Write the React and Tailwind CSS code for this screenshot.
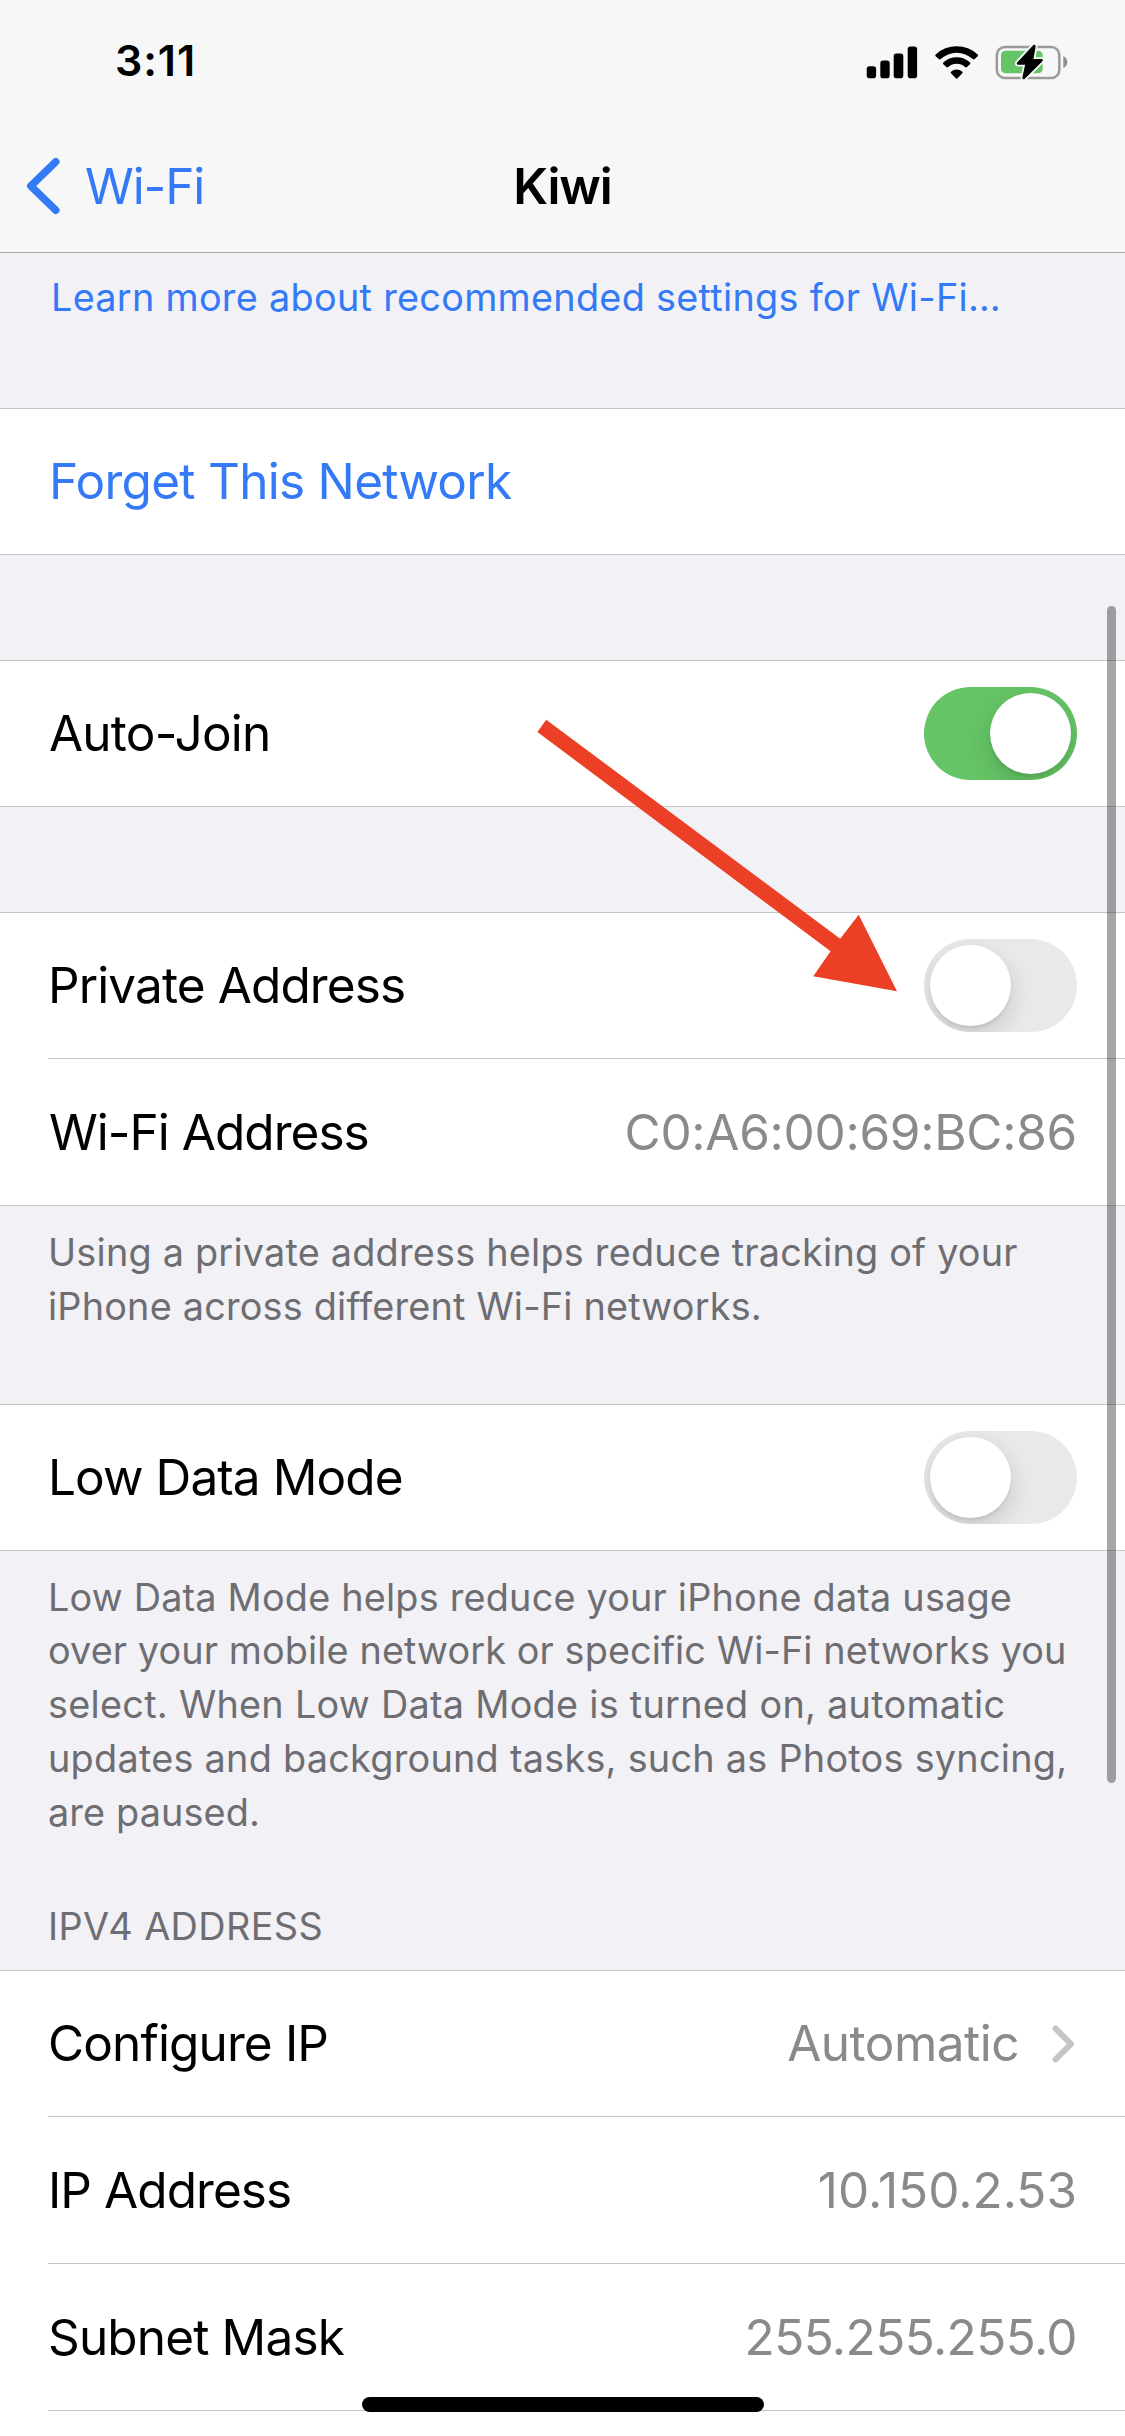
import React from "react";

function SignalIcon() {
  return (
    <svg width="52" height="34" viewBox="0 0 52 34" fill="#000">
      <rect x="0.7" y="21.3" width="9.4" height="11.9" rx="2.8" />
      <rect x="14.3" y="15.6" width="9.4" height="17.6" rx="2.8" />
      <rect x="27.7" y="8.6" width="9.6" height="24.6" rx="2.8" />
      <rect x="41.7" y="1.6" width="9.4" height="31.6" rx="2.8" />
    </svg>
  );
}

function WifiIcon() {
  return (
    <svg width="46" height="36" viewBox="0 0 138 108">
      <path d="M5 37 L14 45 Q17 47.500 20 45 A71 71 0 0 1 116 45 Q119 47.500 122 45 L131 37 Q133.500 34 131 31.500 A92 92 0 0 0 5 31.500 Q2.500 34 5 37 Z" fill="#000" />
      <path d="M28 61 L37 69 Q40 71.500 43 69 A37 37 0 0 1 93 69 Q96 71.500 99 69 L108 61 Q110.500 58 108 55.500 A58 58 0 0 0 28 55.500 Q25.500 58 28 61 Z" fill="#000" />
      <path d="M51 83 A26 26 0 0 1 85 83 Q87.500 85.500 85 88 L70.500 103 Q68 105.500 65.500 103 L51 88 Q48.500 85.500 51 83 Z" fill="#000" />
    </svg>
  );
}

function BatteryIcon() {
  return (
    <svg width="90" height="50" viewBox="0 0 270 150">
      <rect x="20.500" y="30" width="187.500" height="93" rx="24" fill="none" stroke="#9b9b9b" strokeWidth="7.500" />
      <path d="M220 58 Q232 64 232 75 Q232 87 220 93 Z" fill="#8e8e8e" />
      <rect x="33" y="41" width="125" height="68" rx="14" fill="#65c466" />
      <path
        d="M131 26 L83 78 Q81 81 85 81 H108 L99 122 Q99 126 103 124 L156 71 Q158 68 154 68 H128 L135 28 Q135 24 131 26 Z"
        fill="#f7f7f7"
        stroke="#f7f7f7"
        strokeWidth="15"
        strokeLinejoin="round"
      />
      <path
        d="M131 26 L83 78 Q81 81 85 81 H108 L99 122 Q99 126 103 124 L156 71 Q158 68 154 68 H128 L135 28 Q135 24 131 26 Z"
        fill="#000"
        stroke="#000"
        strokeWidth="4"
        strokeLinejoin="round"
      />
    </svg>
  );
}

function Toggle({ on }) {
  return (
    <div
      className={`flex h-[93px] w-[153px] items-center overflow-hidden rounded-full px-1.5 ${
        on ? "justify-end bg-[#65c466]" : "justify-start bg-[#e9e9ea]"
      }`}
    >
      <div className="size-[81px] rounded-full bg-white shadow-[0_9px_24px_rgba(0,0,0,0.15),0_3px_3px_rgba(0,0,0,0.06)]" />
    </div>
  );
}

function Row({ label, labelClass, value, valueClass, children, tall, divider = true }) {
  return (
    <div className={`flex pl-12 ${tall ? "h-[147px]" : "h-[146px]"}`}>
      <div
        className={`flex grow items-center justify-between pr-12 ${
          divider ? "border-b border-[#c6c6c8]" : "pb-px"
        }`}
      >
        <span className={`leading-[60px] ${tall ? "" : "pb-0.5"} ${labelClass}`}>{label}</span>
        {value && (
          <span className={`leading-[60px] text-[#8a8a8d] ${valueClass}`}>{value}</span>
        )}
        {children}
      </div>
    </div>
  );
}

function Group({ children, open }) {
  return (
    <section className="border-t border-[#c6c6c8] bg-white">
      {children}
      {!open && <div className="-mt-px h-px bg-[#c6c6c8]" />}
    </section>
  );
}

export default function App() {
  return (
    <div className="relative flex h-[2436px] w-[1125px] flex-col overflow-hidden bg-[#f2f1f6] font-['Inter',sans-serif] text-[49.5px] whitespace-nowrap text-black">
      <header className="h-[253px] shrink-0 border-b border-[#a9a9ac] bg-[#f7f7f7]">
        <div className="flex h-[123px] items-center justify-between pr-[45px] pl-[115px]">
          <span className="pb-[3px] text-[43px] leading-[60px] font-semibold tracking-[0.9px]">3:11</span>
          <div className="flex items-center">
            <SignalIcon />
            <div className="ml-[15.5px]">
              <WifiIcon />
            </div>
            <div className="ml-[10.5px]">
              <BatteryIcon />
            </div>
          </div>
        </div>
        <div className="grid h-[126px] grid-cols-3 items-center">
          <div className="flex items-center text-[#347af6]">
            <svg
              className="ml-[25px]"
              width="36"
              height="58"
              viewBox="0 0 36 58"
              fill="none"
              stroke="currentColor"
              strokeWidth="7.500"
              strokeLinecap="round"
              strokeLinejoin="round"
            >
              <path d="M30.800 4.800 L5.800 29 L30.800 53.200" />
            </svg>
            <span className="ml-6 leading-[60px] tracking-[-1.1px]">Wi-Fi</span>
          </div>
          <h1 className="text-center leading-[60px] font-semibold tracking-[-1.1px]">Kiwi</h1>
        </div>
      </header>

      <p className="h-[155px] shrink-0 pt-[17px] pl-[51px] text-[37.8px] leading-[54px] tracking-[0.29px] text-[#347af6]">
        Learn more about recommended settings for Wi-Fi…
      </p>

      <Group>
        <Row label="Forget This Network" labelClass="ml-px tracking-[-0.73px] text-[#347af6]" divider={false} />
      </Group>

      <div className="h-[105px] shrink-0" />

      <Group>
        <Row label="Auto-Join" labelClass="ml-px tracking-[-0.78px]" divider={false}>
          <Toggle on />
        </Row>
      </Group>

      <div className="h-[105px] shrink-0" />

      <Group>
        <Row label="Private Address" labelClass="tracking-[-0.89px]">
          <Toggle />
        </Row>
        <Row
          tall
          label="Wi-Fi Address"
          labelClass="ml-px tracking-[-0.97px]"
          value="C0:A6:00:69:BC:86"
          valueClass="tracking-[-0.28px]"
          divider={false}
        />
      </Group>

      <div className="h-[198px] shrink-0 pt-5 pl-12 text-[37.8px] leading-[53.5px] text-[#6d6d72]">
        <div className="tracking-[0.22px]">Using a private address helps reduce tracking of your</div>
        <div className="tracking-[0.2px]">iPhone across different Wi-Fi networks.</div>
      </div>

      <Group>
        <Row label="Low Data Mode" labelClass="tracking-[-0.91px]" divider={false}>
          <Toggle />
        </Row>
      </Group>

      <div className="flex h-[419px] shrink-0 flex-col justify-between pt-[19.5px] pb-[16px] pl-12 text-[37.8px] leading-[53.75px] text-[#6d6d72]">
        <div>
          <div className="tracking-[0.2px]">Low Data Mode helps reduce your iPhone data usage</div>
          <div className="tracking-[0.11px]">over your mobile network or specific Wi-Fi networks you</div>
          <div className="tracking-[0.28px]">select. When Low Data Mode is turned on, automatic</div>
          <div className="tracking-[0.26px]">updates and background tasks, such as Photos syncing,</div>
          <div className="tracking-[0.13px]">are paused.</div>
        </div>
        <h2 className="tracking-[0.4px]">IPV4 ADDRESS</h2>
      </div>

      <Group open>
        <Row label="Configure IP" labelClass="tracking-[-0.87px]">
          <div className="flex items-center">
            <span className="pb-0.5 leading-[60px] tracking-[-0.52px] text-[#8a8a8d]">Automatic</span>
            <svg
              className="mr-0.5 ml-8"
              width="24"
              height="40"
              viewBox="0 0 24 40"
              fill="none"
              stroke="#c5c5c7"
              strokeWidth="6"
              strokeLinecap="round"
              strokeLinejoin="round"
            >
              <path d="M4.500 4.500 L20 20 L4.500 35.500" />
            </svg>
          </div>
        </Row>
        <Row tall label="IP Address" labelClass="tracking-[-0.93px]" value="10.150.2.53" valueClass="tracking-[0.02px]" />
        <Row tall label="Subnet Mask" labelClass="tracking-[-0.85px]" value="255.255.255.0" valueClass="tracking-[-0.57px]" />
        <div className="h-[25px]" />
      </Group>

      {/* Scroll indicator */}
      <div className="absolute top-[606px] left-[1107px] h-[1177px] w-[9px] rounded-full bg-black/35" />

      {/* Home indicator */}
      <div className="absolute top-[2397px] left-[362px] h-[15px] w-[402px] rounded-full bg-black" />

      {/* Pointer arrow towards the Private Address switch */}
      <svg className="absolute top-[710px] left-[530px]" width="380" height="290" viewBox="530 710 380 290">
        <path
          d="M546.200 719.700 L840.200 938.700 L858.700 914.700 L897 991.300 L813.200 976.300 L830.600 951.300 L537.400 732 Z"
          fill="#eb4026"
        />
      </svg>
    </div>
  );
}
